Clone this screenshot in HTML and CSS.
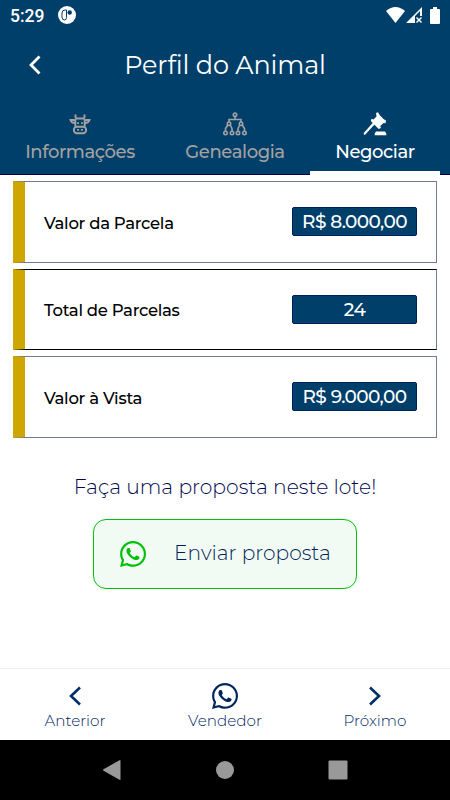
FILE: index.html
```html
<!DOCTYPE html>
<html lang="pt-BR">
<head>
<meta charset="utf-8">
<title>Perfil do Animal</title>
<link rel="stylesheet" href="styles.css">
</head>
<body>
<svg width="0" height="0" class="defs">
  <symbol id="whatsapp" viewBox="0 0 448 448">
    <path d="M380.900 65.100C339 23.100 283.200 0 223.900 0 101.500 0 1.900 99.600 1.900 222c0 39.100 10.200 77.300 29.600 111L0 448l117.700-30.900c32.400 17.700 68.900 27 106.100 27h.1c122.300 0 224.100-99.600 224.100-222 0-59.300-25.200-115-67.100-157zm-157 341.600c-33.200 0-65.700-8.900-94-25.700l-6.700-4-69.800 18.300L72 327.200l-4.400-7c-18.500-29.400-28.200-63.300-28.200-98.200 0-101.700 82.800-184.500 184.600-184.500 49.300 0 95.600 19.200 130.400 54.100 34.800 34.900 56.200 81.200 56.100 130.500 0 101.800-84.900 184.600-186.600 184.600zm101.200-138.200c-5.500-2.800-32.800-16.200-37.900-18-5.100-1.900-8.800-2.800-12.500 2.800-3.700 5.600-14.300 18-17.600 21.800-3.200 3.700-6.500 4.200-12 1.400-32.600-16.300-54-29.100-75.500-66-5.700-9.800 5.700-9.100 16.300-30.300 1.800-3.700.9-6.900-.5-9.700-1.400-2.800-12.500-30.100-17.100-41.200-4.500-10.800-9.100-9.300-12.500-9.500-3.200-.2-6.900-.2-10.600-.2-3.700 0-9.700 1.400-14.800 6.900-5.100 5.600-19.400 19-19.400 46.300 0 27.300 19.900 53.700 22.600 57.400 2.800 3.700 39.100 59.700 94.800 83.800 35.200 15.200 49 16.500 66.600 13.900 10.700-1.600 32.800-13.400 37.400-26.400 4.600-13 4.600-24.100 3.200-26.400-1.300-2.500-5-3.900-10.500-6.600z"/>
  </symbol>
</svg>
<div class="app">
  <header class="header">
    <div class="status">
      <span class="time">5:29</span>
      <svg class="app-dot" viewBox="0 0 18 18"><circle cx="9" cy="9" r="9" fill="#fff"/><path d="M8.500 4H7Q4 4 4 7v4q0 3 2.500 3 2 0 2-2.500V4" fill="none" stroke="#003f6a" stroke-width="1"/><circle cx="11.700" cy="6.500" r="2.200" fill="#003f6a"/></svg>
      <span class="spacer"></span>
      <svg class="wifi" viewBox="0 0 19 16"><path d="M0 4Q9.500-4 19 4L9.500 16Z"/></svg>
      <svg class="signal" viewBox="0 0 17 16"><path fill-rule="evenodd" d="M0 16 16 0V9H14V4L9 9V16ZM10 11l1-1 2 2 2-2 1 1-2 2 2 2-1 1-2-2-2 2-1-1 2-2Z"/></svg>
      <svg class="battery" viewBox="0 0 10 17"><path d="M3 0h4v2h2q1 0 1 1v13q0 1-1 1H1q-1 0-1-1V3q0-1 1-1h2Z"/></svg>
    </div>
    <div class="titlebar">
      <svg class="back" viewBox="0 0 12 20"><path d="M10.500 1.500 2 10l8.500 8.500"/></svg>
      <h1>Perfil do Animal</h1>
    </div>
    <nav class="tabs">
      <div class="tab">
        <svg viewBox="0 0 24 24" class="line cow"><path d="M7.500 2.500V5q0 1.500 2 1.500h5q2 0 2-1.500V2.500M7 8H2.500q.8 3 4.500 3M17 8h4.500q-.8 3-4.500 3M7.300 7v7.500M16.700 7v7.500M10 10.200v1.800M14 10.200v1.800"/><rect x="5.800" y="14.700" width="12.400" height="6.500" rx="3.200"/><path d="M10 17v1.800M14 17v1.800"/></svg>
        <span>Informações</span>
      </div>
      <div class="tab middle">
        <svg viewBox="0 0 24 24" class="line"><circle cx="12" cy="2.700" r="1.700"/><circle cx="6" cy="11.700" r="1.700"/><circle cx="18" cy="11.700" r="1.700"/><circle cx="2.500" cy="21" r="1.700"/><circle cx="9" cy="21" r="1.700"/><circle cx="15" cy="21" r="1.700"/><circle cx="21.500" cy="21" r="1.700"/><path d="M12 4.500v3M6 10V7.500h12V10M4.800 13l-2.300 3.500V19M7.200 13 9 16.500V19M16.800 13 15 16.500V19M19.200 13l2.300 3.500V19"/></svg>
        <span>Genealogia</span>
      </div>
      <div class="tab active">
        <svg viewBox="0 0 24 24" class="solid"><path d="m13 1 2-.8 2 3.300 3.500 3.500 2.700 1.800-.8 2.500-1.900-.4-3.200 3.200.6 1.900-2.200.9-7.900-7.900.8-2.200 1.900.6 3-3ZM10.300 10.200l1.700 1.700L3.200 21.500Q1.800 23.200.9 22.500.3 21.700 1.200 20.500ZM13 19.500h9l1.300 2v1.700h-11.600v-1.700Z"/></svg>
        <span>Negociar</span>
      </div>
    </nav>
  </header>
  <main class="content">
    <section class="cards">
      <div class="card"><span>Valor da Parcela</span><b>R$ 8.000,00</b></div>
      <div class="card dark"><span>Total de Parcelas</span><b>24</b></div>
      <div class="card"><span>Valor à Vista</span><b>R$ 9.000,00</b></div>
    </section>
    <p class="prompt">Faça uma proposta neste lote!</p>
    <button class="send"><svg><use href="#whatsapp"/></svg><span>Enviar proposta</span></button>
  </main>
  <footer class="bottom">
    <div class="action"><svg class="chev" viewBox="0 0 26 26"><path d="M18 4.500 9 13l9 8.500"/></svg><span>Anterior</span></div>
    <div class="action"><svg><use href="#whatsapp"/></svg><span>Vendedor</span></div>
    <div class="action"><svg class="chev" viewBox="0 0 26 26"><path d="M8 4.500 17 13l-9 8.500"/></svg><span>Próximo</span></div>
  </footer>
  <div class="android">
    <svg viewBox="0 0 20 20"><path d="M1.500 9.200 17.500.2q1-.4 1 .6v18.400q0 1-1 .6L1.500 10.800q-1-.8 0-1.600Z"/></svg>
    <svg viewBox="0 0 20 20"><circle cx="10" cy="10" r="9"/></svg>
    <svg viewBox="0 0 20 20"><rect x=".5" y=".5" width="19" height="19" rx="1"/></svg>
  </div>
</div>
</body>
</html>
```
FILE: styles.css
```css
* { box-sizing: border-box; }
body { margin: 0; font-family: Montserrat, Inter, sans-serif; background: #fff; }
.defs { position: absolute; }
span, h1, p, b { white-space: nowrap; }
.app { width: 450px; height: 800px; display: flex; flex-direction: column; overflow: hidden; }
.header { height: 175px; background: #003f6a; border-bottom: 1px solid #00004d; color: #fff; display: flex; flex-direction: column; flex: none; }
.status { height: 30px; display: flex; align-items: center; padding: 0 10px; fill: #fff; }
.time { font: 500 17.500px/30px Roboto, sans-serif; width: 48px; padding-top: 1px; }
.app-dot { width: 18px; height: 18px; }
.spacer { flex: 1; }
.wifi { width: 19px; height: 16px; }
.signal { width: 17px; height: 16px; margin: 0 7px 0 1px; }
.battery { width: 10px; height: 17px; }
.titlebar { height: 70px; display: grid; grid-template-columns: 41px 1fr 41px; align-items: center; }
.back { width: 12px; height: 20px; margin-left: 29px; fill: none; stroke: #fff; stroke-width: 2.800; }
h1 { margin: 0; text-align: center; font-size: 25.500px; font-weight: 400; line-height: 30px; letter-spacing: -.15px; }
.tabs { height: 75px; display: grid; grid-template-columns: 130px 165px 130px; padding: 0 10px 0 15px; }
.tab { display: flex; flex-direction: column; align-items: center; padding-top: 12px; color: #a2a2a2; font-size: 18px; font-weight: 500; line-height: 24px; letter-spacing: -.4px; }
.middle { padding-left: 15px; }
.tab svg { width: 24px; height: 24px; margin-bottom: 4px; }
.line { fill: none; stroke: currentColor; stroke-width: 1.600; }
.cow { stroke-width: 1.900; }
.solid { fill: currentColor; }
.active { color: #fff; border-bottom: 4px solid #fff; margin-bottom: -1px; }
.content { flex: 1; display: flex; flex-direction: column; align-items: center; background: #fff; }
.cards { width: 424px; margin: 6px 0 0; display: grid; gap: 6px; }
.card { height: 81.500px; border: 1px solid #727a94; border-left: 12px solid #cfa500; display: flex; align-items: center; justify-content: space-between; padding: 0 19px; font-size: 16.500px; font-weight: 500; color: #000; }
.card span { padding-top: 2px; letter-spacing: -.3px; }
.dark { border-top-color: #000; border-bottom-color: #000; }
.card b { width: 125px; height: 29px; border-radius: 2px; border: 1px solid #00205a; background: #003f6a; color: #fff; font-size: 18.500px; font-weight: 500; line-height: 28px; letter-spacing: -.6px; text-align: center; }
.prompt { margin: 34px 0 0; font-size: 20.300px; font-weight: 300; line-height: 30px; color: #00084f; }
.send { width: 264px; height: 70px; margin-top: 17px; display: flex; align-items: center; border: 1.500px solid #00c008; border-radius: 13px; background: #f2fbf3; padding: 0 26px; gap: 28px; font: 300 20.200px/26px Montserrat, Inter, sans-serif; color: #001f58; }
.send svg { width: 26px; height: 26px; fill: #00c008; flex: none; }
.send span { padding-bottom: 2px; }
.bottom { height: 72px; border-top: 1px solid #eee; display: grid; grid-template-columns: repeat(3, 150px); color: #00265e; font-size: 15.200px; font-weight: 300; line-height: 20px; flex: none; }
.action { display: flex; flex-direction: column; align-items: center; padding-top: 14px; }
.action svg { width: 26px; height: 26px; margin-bottom: 2px; fill: #00265e; }
.action .chev { fill: none; stroke: #002e66; stroke-width: 2.600; }
.android { height: 60px; flex: none; background: #000; display: flex; align-items: center; justify-content: center; gap: 93px; }
.android svg { width: 20px; height: 20px; fill: #999; }
```
